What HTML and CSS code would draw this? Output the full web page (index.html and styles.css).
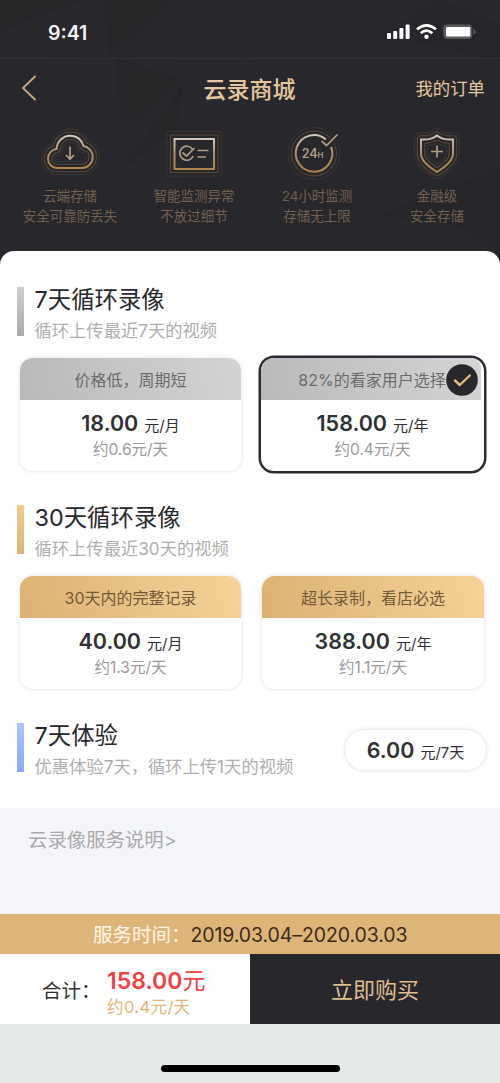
FILE: index.html
```html
<!DOCTYPE html>
<html lang="zh-CN">
<head>
<meta charset="utf-8">
<title>云录商城</title>
<link rel="stylesheet" href="styles.css">
</head>
<body>
<div class="screen">
  <header class="hero">
    <svg class="hero-bg" viewBox="0 0 500 270" preserveAspectRatio="none" aria-hidden="true">
      <path d="M0 0H82L0 31Z M105 0H176L109 56L104 0Z M115 58L183 80L148 113L122 125Z M121 170L184 83L176 128Z" fill="#262629"/>
      <path d="M45 60L115 58L122 125L52 117Z M122 172L178 128L184 200L100 192Z M184 0L250 60L290 118L182 110Z M300 0L360 25L310 55Z" fill="#29282d"/>
      <path d="M440 0L500 24V60L380 35Z M378 215L500 168V250L455 225Z" fill="#262529"/>
      <path d="M0 58.5H500" stroke="#313035"/>
    </svg>
    <div class="status">
      <span class="time">9:41</span>
      <svg class="signals" width="92" height="18" viewBox="0 0 92 18">
        <g fill="#fff">
          <rect x="1" y="10" width="4" height="6" rx="1"/><rect x="7.2" y="8" width="4" height="8" rx="1"/><rect x="13.4" y="5" width="4" height="11" rx="1"/><rect x="19.6" y="1.5" width="4" height="14.5" rx="1"/>
          <circle cx="40.5" cy="13.8" r="2.2"/>
        </g>
        <path d="M31 6.2Q40.5 -1.6 50 6.2M34.7 10.2Q40.5 5.2 46.3 10.2" fill="none" stroke="#fff" stroke-width="2.7"/>
        <rect x="57.2" y="1.5" width="29" height="14.5" rx="4" fill="#59585c"/>
        <rect x="60" y="4" width="24.3" height="9.5" rx="1.2" fill="#fff"/>
        <path d="M87.5 5.5L90.2 9L87.5 12Z" fill="#59585c"/>
      </svg>
    </div>
    <nav class="nav">
      <svg class="back" width="18" height="28" viewBox="0 0 18 28"><path d="M15.5 2L3 14L15.5 26" fill="none" stroke="#c9ad85" stroke-width="1.8"/></svg>
      <h1>云录商城</h1>
      <span class="orders">我的订单</span>
    </nav>
    <svg class="defs" width="0" height="0">
      <defs>
        <linearGradient id="gold" x1="0" y1="0" x2="0" y2="1"><stop offset="0" stop-color="#d5cabd"/><stop offset=".5" stop-color="#a98a69"/><stop offset="1" stop-color="#b18548"/></linearGradient>
        <path id="cloud" d="M21 43C14.5 43 11 38.5 11 33.5C11 28 15.5 24.5 19.5 24C20 16 26 10.8 33.5 10.8C40 10.8 45 15 46.5 21C52 22 55.7 26.5 55.7 32C55.7 38 51 43 45 43Z"/>
        <path id="shield" d="M33 10.5C37.5 14 43 15 49 14.5V29C49 36 41 42 33 47C25 42 17 36 17 29V14.5C23 15 28.5 14 33 10.5Z"/>
      </defs>
    </svg>
    <div class="features">
      <div class="feature">
        <svg width="66" height="60" viewBox="0 0 66 60">
          <use href="#cloud" class="halo2"/><use href="#cloud" class="halo2-cut"/><use href="#cloud" class="halo1"/><use href="#cloud" class="halo1-cut"/><use href="#cloud" class="line"/>
          <path class="mark" d="M33 21.5V34M29 30L33 34.2L37 30"/>
        </svg>
        <p>云端存储<br>安全可靠防丢失</p>
      </div>
      <div class="feature">
        <svg width="66" height="60" viewBox="0 0 66 60">
          <rect class="ring2" x="6" y="6.500" width="54.500" height="44.500" rx="1"/><rect class="ring1" x="9.500" y="10" width="47.500" height="37.500"/><rect class="line" x="13.500" y="14" width="39.500" height="30"/>
          <path class="mark" d="M31.500 24.200A7 7 0 1 0 32.200 31M21.500 27.500L25.500 31L33.500 23M36.500 25.500H47.500M36.500 32H45"/>
        </svg>
        <p>智能监测异常<br>不放过细节</p>
      </div>
      <div class="feature">
        <svg width="66" height="60" viewBox="0 0 66 60">
          <circle class="ring2" cx="30" cy="28.500" r="26"/><circle class="ring1" cx="30" cy="28.500" r="22.500"/>
          <path d="M38 17L47 21L54 12" fill="none" stroke="#28272b" stroke-width="7"/>
          <path class="line" d="M42 14.500A18.300 18.300 0 1 0 47.200 22"/>
          <path class="mark" d="M37.500 16L42.500 20.500L53.500 9.500"/>
          <text class="hours" x="17.700" y="33.300">24<tspan class="hours-unit">H</tspan></text>
        </svg>
        <p>24小时监测<br>存储无上限</p>
      </div>
      <div class="feature">
        <svg width="66" height="60" viewBox="0 0 66 60">
          <use href="#shield" class="halo2"/><use href="#shield" class="halo2-cut"/><use href="#shield" class="halo1"/><use href="#shield" class="halo1-cut"/><use href="#shield" class="line"/>
          <path class="mark" d="M33 20.500V32.500M27 26.500H39"/>
        </svg>
        <p>金融级<br>安全存储</p>
      </div>
    </div>
  </header>

  <main class="sheet">
    <section class="plan silver">
      <div class="plan-title"><i class="bar"></i><div><h2>7天循环录像</h2><p>循环上传最近7天的视频</p></div></div>
      <div class="cards">
        <article class="card"><div class="tag">价格低，周期短</div><div class="price"><b>18.00</b><span>元/月</span></div><div class="daily">约0.6元/天</div></article>
        <article class="card selected"><div class="tag">82%的看家用户选择</div><div class="price"><b>158.00</b><span>元/年</span></div><div class="daily">约0.4元/天</div>
          <svg class="check" width="32" height="32" viewBox="0 0 32 32"><circle cx="16" cy="16" r="15.800" fill="#28272b"/><path d="M9 16.500L13.800 21L23.800 11.500" fill="none" stroke="#e3ba78" stroke-width="2.400" stroke-linecap="round" stroke-linejoin="round"/></svg>
        </article>
      </div>
    </section>
    <section class="plan golden">
      <div class="plan-title"><i class="bar"></i><div><h2>30天循环录像</h2><p>循环上传最近30天的视频</p></div></div>
      <div class="cards">
        <article class="card"><div class="tag">30天内的完整记录</div><div class="price"><b>40.00</b><span>元/月</span></div><div class="daily">约1.3元/天</div></article>
        <article class="card"><div class="tag">超长录制，看店必选</div><div class="price"><b>388.00</b><span>元/年</span></div><div class="daily">约1.1元/天</div></article>
      </div>
    </section>
    <section class="plan trial">
      <div class="plan-title"><i class="bar"></i><div><h2>7天体验</h2><p>优惠体验7天，循环上传1天的视频</p></div></div>
      <div class="pill"><b>6.00</b><span>元/7天</span></div>
    </section>
  </main>

  <div class="note">云录像服务说明&gt;</div>
  <div class="period"><span>服务时间：</span><time>2019.03.04–2020.03.03</time></div>
  <div class="checkout">
    <div class="total"><span class="total-label">合计：</span><div><div class="amount"><b>158.00</b>元</div><div class="per-day">约0.4元/天</div></div></div>
    <div class="buy">立即购买</div>
  </div>
  <footer class="home"><i></i></footer>
</div>
</body>
</html>
```

FILE: styles.css
```css
* { box-sizing: border-box; margin: 0; padding: 0; }
body { font-family: Inter, "Noto Sans CJK SC", sans-serif; color: #303035; }
h1, h2, p { font-weight: 400; }
.screen { width: 500px; height: 1083px; overflow: hidden; display: flex; flex-direction: column; background: #28272b; }

.hero { position: relative; height: 251px; flex: none; background: #28272b; }
.hero-bg { position: absolute; left: 0; top: 0; width: 500px; height: 270px; }
.status, .nav, .features { position: relative; }
.status { height: 58px; padding: 23px 22px 0 48px; display: flex; justify-content: space-between; }
.time { font-size: 19.500px; line-height: 20px; font-weight: 600; color: #f3f3f6; }
.signals { margin-top: 0; }
.nav { height: 60px; padding: 0 15px 0 20px; display: grid; grid-template-columns: 94px 1fr 100px; align-items: center; color: #e4c79e; }
.nav h1 { font-size: 23px; line-height: 30px; margin-top: 3px; font-weight: 500; text-align: center; }
.nav .back { display: block; }
.orders { font-size: 17.400px; line-height: 26px; margin-top: 2px; text-align: right; white-space: nowrap; }
.defs { position: absolute; }
.features { padding: 7px 0 0 8px; display: grid; grid-template-columns: 124px 124px 122px 118px; }
.feature { display: flex; flex-direction: column; align-items: center; text-align: center; }
.feature svg { display: block; }
.feature p { margin-top: 2px; font-size: 13.500px; line-height: 19.500px; color: #715f4f; white-space: nowrap; }

.halo2, .halo2-cut, .halo1, .halo1-cut, .line, .mark, .ring1, .ring2 { fill: none; }
.halo2 { stroke: #3a3532; stroke-width: 14px; stroke-linejoin: round; }
.halo2-cut { stroke: #28272b; stroke-width: 12px; stroke-linejoin: round; }
.halo1 { stroke: #5a4939; stroke-width: 8.500px; stroke-linejoin: round; }
.halo1-cut { stroke: #28272b; stroke-width: 6.500px; stroke-linejoin: round; }
.ring2 { stroke: #3a3532; stroke-width: 1px; }
.ring1 { stroke: #5a4939; stroke-width: 1px; }
.line { stroke: url(#gold); stroke-width: 2px; }
.mark { stroke: #b29b83; stroke-width: 1.700px; }
.hours { font-size: 12.500px; font-weight: 600; fill: #b29b83; }
.hours-unit { font-size: 8px; }

.sheet { position: relative; flex: none; height: 557px; padding: 36px 14px 0 17px; background: #fff; border-radius: 14px 14px 0 0; }
.plan { height: 218px; }
.plan-title { display: flex; gap: 11px; height: 49px; }
.bar { width: 6.500px; height: 49px; background: linear-gradient(#cfcfd0, #ababac); }
.golden .bar { background: linear-gradient(#f4ca8b, #deb379); }
.trial .bar { background: linear-gradient(#aac3ff, #8aa8fd); }
.plan-title h2 { font-size: 23.400px; line-height: 28px; margin-top: -1px; color: #28282c; white-space: nowrap; }
.plan-title p { font-size: 17.300px; line-height: 24px; margin-top: 5px; color: #b0b0b0; white-space: nowrap; }
.cards { display: grid; grid-template-columns: 221px 222px; gap: 21px; margin: 22px 0 0 3px; }
.card { position: relative; height: 113px; border-radius: 13px; background: #fff; box-shadow: 0 0 4px rgba(60, 60, 70, .17); text-align: center; }
.tag { height: 42px; border-radius: 13px 13px 0 0; font-size: 16px; line-height: 44px; white-space: nowrap; color: #6b6b6c; background: linear-gradient(75deg, #b9b9ba, #d4d4d5); }
.golden .tag { color: #745a36; background: linear-gradient(75deg, #dcb174, #f6d398); }
.price { display: flex; justify-content: center; align-items: baseline; gap: 6px; height: 34px; padding-top: 6px; line-height: 34px; color: #303035; }
.price b, .pill b { font-size: 21.500px; font-weight: 600; }
.price span, .pill span { font-size: 15px; font-weight: 400; }
.daily { margin-top: 5px; font-size: 15.500px; line-height: 22px; color: #9b9b9c; }
.selected { box-shadow: 0 0 0 2.500px #2b2b33; margin-left: -1px; }
.selected .tag { margin-right: 3px; padding-left: 2px; border-top-right-radius: 10px; }
.check { position: absolute; right: 6px; top: 6px; }
.trial { height: 85px; display: flex; justify-content: space-between; }
.pill { width: 141px; height: 40px; margin-top: 7px; border-radius: 21px; box-shadow: 0 0 4px rgba(60, 60, 70, .22); display: flex; justify-content: center; align-items: baseline; gap: 6px; line-height: 40px; flex: none; }

.note { flex: none; height: 106px; padding: 18px 28px; background: #f4f5f8; color: #aaaaac; font-size: 19.400px; line-height: 28px; }
.period { flex: none; height: 40px; display: flex; padding-left: 93px; background: #deb578; color: #fff5e5; font-size: 19.500px; line-height: 42px; white-space: nowrap; }
.period time { color: #3d2a1b; letter-spacing: -.1px; }
.checkout { flex: none; height: 70px; display: grid; grid-template-columns: 250px 250px; }
.total { display: flex; padding-left: 42px; background: #fff; }
.total-label { width: 65px; font-size: 19.500px; line-height: 75px; white-space: nowrap; }
.amount { margin-top: 11px; font-size: 23px; line-height: 32px; color: #ec4346; white-space: nowrap; }
.amount b { font-weight: 600; }
.per-day { font-size: 16.500px; line-height: 21px; letter-spacing: .4px; color: #e1b676; white-space: nowrap; }
.buy { background: #28272b; color: #dfbd90; text-align: center; font-size: 22px; line-height: 72px; }
.home { flex: 1; display: flex; justify-content: center; padding-top: 41px; background: #e4eaea; }
.home i { width: 179px; height: 7px; border-radius: 4px; background: #000; }
```
